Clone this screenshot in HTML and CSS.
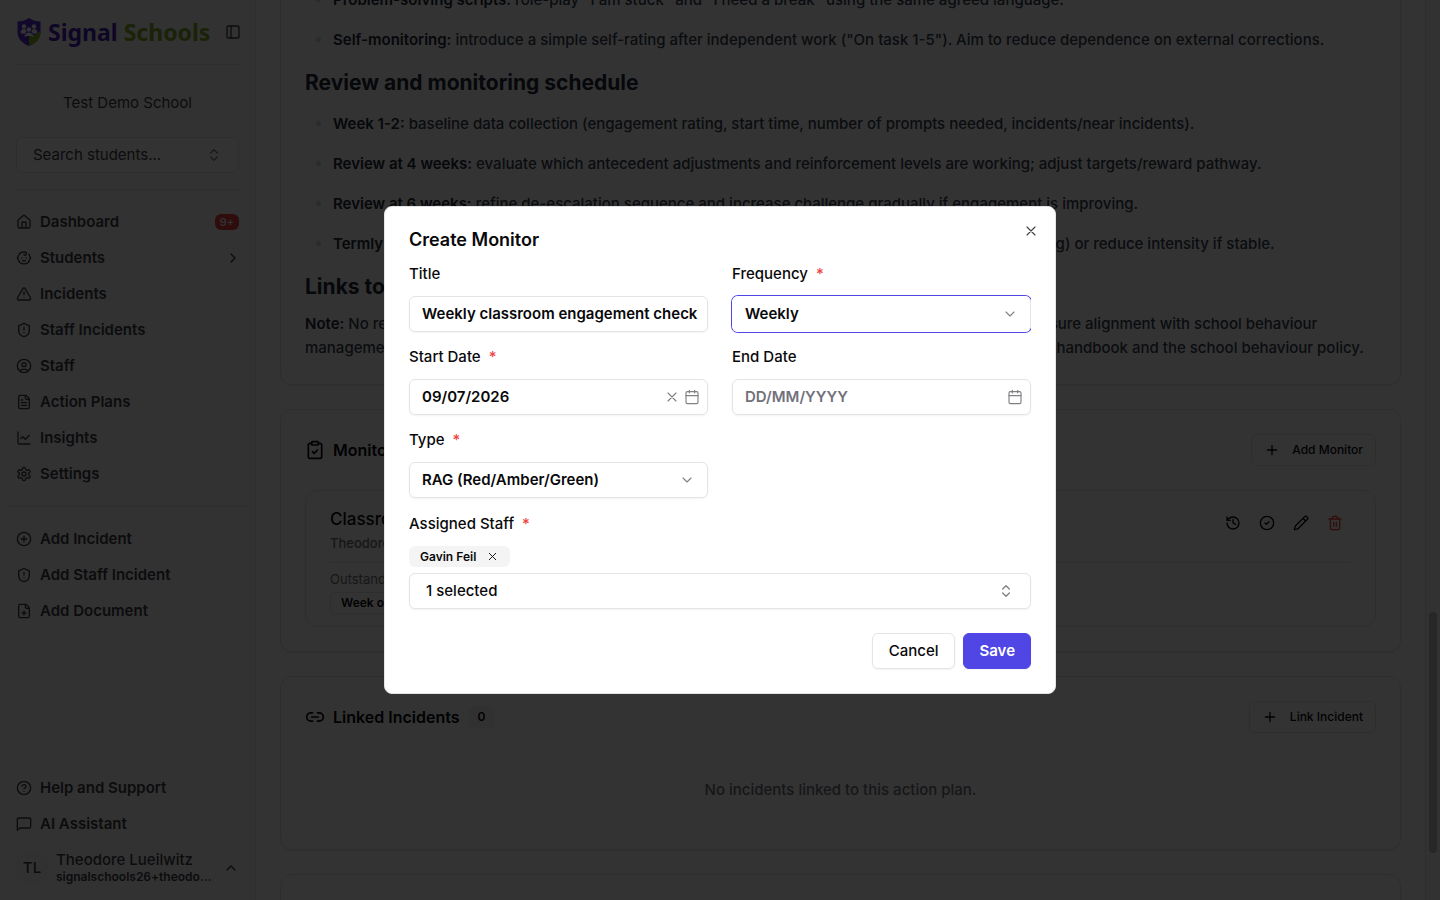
FILE: index.html
```html
<!DOCTYPE html>
<html lang="en">
<head>
<meta charset="utf-8">
<meta name="viewport" content="width=device-width, initial-scale=1">
<title>Signal Schools</title>
<link rel="stylesheet" href="styles.css">
</head>
<body>
<svg class="defs" aria-hidden="true">
  <symbol id="shield-alert" viewBox="0 0 24 24"><path d="M20 13c0 5-3.500 7.500-7.660 8.950a1 1 0 0 1-.67-.01C7.500 20.500 4 18 4 13V6a1 1 0 0 1 1-1c2 0 4.500-1.200 6.240-2.720a1.170 1.170 0 0 1 1.520 0C14.510 3.810 17 5 19 5a1 1 0 0 1 1 1zM12 8v4M12 16h.01"/></symbol>
  <symbol id="x" viewBox="0 0 24 24"><path d="M18 6 6 18M6 6l12 12"/></symbol>
  <symbol id="plus" viewBox="0 0 24 24"><path d="M5 12h14M12 5v14"/></symbol>
  <symbol id="updown" viewBox="0 0 24 24"><path d="m7 15 5 5 5-5M7 9l5-5 5 5"/></symbol>
  <symbol id="down" viewBox="0 0 24 24"><path d="m6 9 6 6 6-6"/></symbol>
  <symbol id="calendar" viewBox="0 0 24 24"><path d="M8 2v4M16 2v4M3 10h18"/><rect x="3" y="4" width="18" height="18" rx="2"/></symbol>
</svg>
<div class="app">
  <aside class="sidebar">
    <div class="brand">
      <svg class="brand-mark" viewBox="0 0 24 28" aria-hidden="true">
        <path d="M12 0C8.500 2.500 4.500 3.500.5 3.500V14c0 7 5 11.500 11.500 14C18.500 25.500 23.500 21 23.500 14V3.500C19.500 3.500 15.500 2.500 12 0z" fill="#5a2ad6"/>
        <path d="M23.500 14c0 7-5 11.500-11.500 14V18.500c4-.5 8.500-2 11.500-6z" fill="#84b81e"/>
        <g fill="#fff"><circle cx="7" cy="8.500" r="2.200"/><circle cx="17" cy="8.500" r="2.200"/><circle cx="12" cy="11.500" r="2.300"/><path d="M3.500 15c0-5 6-5 6-1.500l-2 2.500zM20.500 15c0-5-6-5-6-1.500l2 2.500zM7.500 19c0-6 9-6 9 0-2-1-3-1-4.500-1s-3 0-4.500 1z"/></g>
      </svg>
      <span class="brand-name"><span class="brand-first">Signal</span> <span class="brand-second">Schools</span></span>
      <button class="icon-button" type="button" aria-label="Toggle sidebar"><svg class="icon" viewBox="0 0 24 24"><rect x="3" y="3" width="18" height="18" rx="2"/><path d="M9 3v18"/></svg></button>
    </div>
    <hr class="rule">
    <p class="school">Test Demo School</p>
    <button class="search" type="button">Search students...<svg class="icon muted"><use href="#updown"/></svg></button>
    <hr class="rule above-nav">
    <nav class="nav">
      <a href="#"><svg class="icon" viewBox="0 0 24 24"><path d="M15 21v-8a1 1 0 0 0-1-1h-4a1 1 0 0 0-1 1v8"/><path d="M3 10a2 2 0 0 1 .71-1.530l7-6a2 2 0 0 1 2.580 0l7 6A2 2 0 0 1 21 10v9a2 2 0 0 1-2 2H5a2 2 0 0 1-2-2z"/></svg>Dashboard<span class="count">9+</span></a>
      <a href="#"><svg class="icon" viewBox="0 0 24 24"><path d="M9 12h.01M15 12h.01M10 16c.5.300 1.200.5 2 .5s1.500-.2 2-.5"/><path d="M19 6.300a9 9 0 0 1 1.800 3.900 2 2 0 0 1 0 3.600 9 9 0 0 1-17.600 0 2 2 0 0 1 0-3.600A9 9 0 0 1 12 3c2 0 3.500 1.100 3.500 2.500s-.9 2.500-2 2.500c-.8 0-1.500-.4-1.500-1"/></svg>Students<svg class="icon end" viewBox="0 0 24 24"><path d="m9 18 6-6-6-6"/></svg></a>
      <a href="#"><svg class="icon" viewBox="0 0 24 24"><path d="m21.730 18-8-14a2 2 0 0 0-3.480 0l-8 14A2 2 0 0 0 4 21h16a2 2 0 0 0 1.730-3M12 9v4M12 17h.01"/></svg>Incidents</a>
      <a href="#"><svg class="icon"><use href="#shield-alert"/></svg>Staff Incidents</a>
      <a href="#"><svg class="icon" viewBox="0 0 24 24"><circle cx="12" cy="12" r="10"/><circle cx="12" cy="10" r="3"/><path d="M7 20.660V19a2 2 0 0 1 2-2h6a2 2 0 0 1 2 2v1.660"/></svg>Staff</a>
      <a href="#"><svg class="icon" viewBox="0 0 24 24"><path d="M15 2H6a2 2 0 0 0-2 2v16a2 2 0 0 0 2 2h12a2 2 0 0 0 2-2V7zM14 2v4a2 2 0 0 0 2 2h4M10 9H8M16 13H8M16 17H8"/></svg>Action Plans</a>
      <a href="#"><svg class="icon" viewBox="0 0 24 24"><path d="M3 3v16a2 2 0 0 0 2 2h16M7 13l3-3 4 4 6-6"/></svg>Insights</a>
      <a href="#"><svg class="icon" viewBox="0 0 24 24"><path d="M12.220 2h-.44a2 2 0 0 0-2 2v.18a2 2 0 0 1-1 1.730l-.43.25a2 2 0 0 1-2 0l-.15-.08a2 2 0 0 0-2.730.73l-.22.380a2 2 0 0 0 .73 2.730l.15.100a2 2 0 0 1 1 1.720v.51a2 2 0 0 1-1 1.740l-.15.090a2 2 0 0 0-.73 2.730l.22.380a2 2 0 0 0 2.730.73l.15-.08a2 2 0 0 1 2 0l.43.250a2 2 0 0 1 1 1.730V20a2 2 0 0 0 2 2h.44a2 2 0 0 0 2-2v-.18a2 2 0 0 1 1-1.730l.43-.25a2 2 0 0 1 2 0l.15.080a2 2 0 0 0 2.730-.73l.22-.39a2 2 0 0 0-.73-2.730l-.15-.08a2 2 0 0 1-1-1.740v-.5a2 2 0 0 1 1-1.740l.15-.09a2 2 0 0 0 .73-2.730l-.22-.38a2 2 0 0 0-2.730-.73l-.15.080a2 2 0 0 1-2 0l-.43-.25a2 2 0 0 1-1-1.730V4a2 2 0 0 0-2-2z"/><circle cx="12" cy="12" r="3"/></svg>Settings</a>
    </nav>
    <hr class="rule wide">
    <nav class="nav">
      <a href="#"><svg class="icon" viewBox="0 0 24 24"><circle cx="12" cy="12" r="10"/><path d="M8 12h8M12 8v8"/></svg>Add Incident</a>
      <a href="#"><svg class="icon"><use href="#shield-alert"/></svg>Add Staff Incident</a>
      <a href="#"><svg class="icon" viewBox="0 0 24 24"><path d="M15 2H6a2 2 0 0 0-2 2v16a2 2 0 0 0 2 2h12a2 2 0 0 0 2-2V7zM14 2v4a2 2 0 0 0 2 2h4M9 15h6M12 18v-6"/></svg>Add Document</a>
    </nav>
    <div class="sidebar-foot">
      <nav class="nav">
        <a href="#"><svg class="icon" viewBox="0 0 24 24"><circle cx="12" cy="12" r="10"/><path d="M9.090 9a3 3 0 0 1 5.830 1c0 2-3 3-3 3M12 17h.01"/></svg>Help and Support</a>
        <a href="#"><svg class="icon" viewBox="0 0 24 24"><path d="M21 3H4a2 2 0 0 0-2 2v16.500L6 18h14a2 2 0 0 0 2-2V5a2 2 0 0 0-2-2z"/></svg>AI Assistant</a>
      </nav>
      <button class="user" type="button">
        <span class="avatar">TL</span>
        <span class="user-text"><span class="user-name">Theodore Lueilwitz</span><span class="user-mail">signalschools26+theodore@example.com</span></span>
        <svg class="icon" viewBox="0 0 24 24"><path d="m18 15-6-6-6 6"/></svg>
      </button>
    </div>
  </aside>

  <main class="main">
    <section class="card prose">
      <ul>
        <li><strong>Problem-solving scripts:</strong> role-play "I am stuck" and "I need a break" using the same agreed language.</li>
        <li><strong>Self-monitoring:</strong> introduce a simple self-rating after independent work ("On task 1-5"). Aim to reduce dependence on external corrections.</li>
      </ul>
      <h2>Review and monitoring schedule</h2>
      <ul>
        <li><strong>Week 1-2:</strong> baseline data collection (engagement rating, start time, number of prompts needed, incidents/near incidents).</li>
        <li><strong>Review at 4 weeks:</strong> evaluate which antecedent adjustments and reinforcement levels are working; adjust targets/reward pathway.</li>
        <li><strong>Review at 6 weeks:</strong> refine de-escalation sequence and increase challenge gradually if engagement is improving.</li>
        <li><strong>Termly review:</strong> agree whether to continue the plan, update the agreed strategies (including monitoring) or reduce intensity if stable.</li>
      </ul>
      <h2>Links to school policy</h2>
      <p><strong>Note:</strong> No relevant policy documents were found for this plan. Staff should regularly check this plan to ensure alignment with school behaviour management procedures, the safeguarding policy, the attendance policy, the staff wellbeing and training handbook and the school behaviour policy.</p>
    </section>

    <section class="card">
      <header class="card-head">
        <svg class="icon large" viewBox="0 0 24 24"><rect x="8" y="2" width="8" height="4" rx="1"/><path d="M16 4h2a2 2 0 0 1 2 2v14a2 2 0 0 1-2 2H6a2 2 0 0 1-2-2V6a2 2 0 0 1 2-2h2M9 14l2 2 4-4"/></svg>
        <h3>Monitors</h3>
        <button class="small-button" type="button"><svg class="icon"><use href="#plus"/></svg>Add Monitor</button>
      </header>
      <article class="monitor">
        <div class="monitor-top">
          <div class="monitor-title"><h4>Classroom engagement</h4><p>Theodore Lueilwitz</p></div>
          <div class="actions">
            <button class="icon-button" type="button" aria-label="History"><svg class="icon" viewBox="0 0 24 24"><path d="M3 12a9 9 0 1 0 9-9 9.750 9.750 0 0 0-6.740 2.740L3 8M3 3v5h5M12 7v5l4 2"/></svg></button>
            <button class="icon-button" type="button" aria-label="Complete"><svg class="icon" viewBox="0 0 24 24"><circle cx="12" cy="12" r="10"/><path d="m9 12 2 2 4-4"/></svg></button>
            <button class="icon-button" type="button" aria-label="Edit"><svg class="icon" viewBox="0 0 24 24"><path d="M21.170 6.810a1 1 0 0 0-3.980-3.990L3.840 16.170a2 2 0 0 0-.5.830l-1.320 4.350a.5.500 0 0 0 .62.620l4.350-1.320a2 2 0 0 0 .83-.5zM15 5l4 4"/></svg></button>
            <button class="icon-button danger" type="button" aria-label="Delete"><svg class="icon" viewBox="0 0 24 24"><path d="M3 6h18M19 6v14a2 2 0 0 1-2 2H7a2 2 0 0 1-2-2V6M8 6V4a2 2 0 0 1 2-2h4a2 2 0 0 1 2 2v2M10 11v6M14 11v6"/></svg></button>
          </div>
        </div>
        <div class="monitor-bottom">
          <p>Outstanding</p>
          <span class="week">Week of 6 Jul</span>
        </div>
      </article>
    </section>

    <section class="card">
      <header class="card-head">
        <svg class="icon large" viewBox="0 0 24 24"><path d="M9 17H7A5 5 0 0 1 7 7h2M15 7h2a5 5 0 1 1 0 10h-2M8 12h8"/></svg>
        <h3>Linked Incidents</h3><span class="zero">0</span>
        <button class="small-button" type="button"><svg class="icon"><use href="#plus"/></svg>Link Incident</button>
      </header>
      <p class="empty">No incidents linked to this action plan.</p>
    </section>
    <section class="card next"></section>
  </main>
  <div class="scrollbar"><div class="thumb"></div></div>
</div>

<div class="overlay">
  <form class="dialog" role="dialog" aria-modal="true" aria-labelledby="dialog-title">
    <header class="dialog-head">
      <h2 id="dialog-title">Create Monitor</h2>
      <button class="icon-button close" type="button" aria-label="Close"><svg class="icon"><use href="#x"/></svg></button>
    </header>
    <div class="fields">
      <div class="field"><label for="title">Title</label><div class="control wide-text"><input id="title" type="text" value="Weekly classroom engagement check"></div></div>
      <div class="field"><label for="frequency">Frequency <span class="required">*</span></label><div class="control focused"><select id="frequency"><option>Weekly</option></select><svg class="icon muted"><use href="#down"/></svg></div></div>
      <div class="field"><label for="start">Start Date <span class="required">*</span></label><div class="control date"><input id="start" type="text" value="09/07/2026"><button class="icon-button muted" type="button" aria-label="Clear date"><svg class="icon"><use href="#x"/></svg></button><button class="icon-button muted" type="button" aria-label="Pick start date"><svg class="icon"><use href="#calendar"/></svg></button></div></div>
      <div class="field"><label for="end">End Date</label><div class="control date"><input id="end" type="text" placeholder="DD/MM/YYYY"><button class="icon-button muted" type="button" aria-label="Pick end date"><svg class="icon"><use href="#calendar"/></svg></button></div></div>
      <div class="field"><label for="type">Type <span class="required">*</span></label><div class="control"><select id="type"><option>RAG (Red/Amber/Green)</option></select><svg class="icon muted"><use href="#down"/></svg></div></div>
    </div>
    <div class="staff">
      <label for="staff">Assigned Staff <span class="required">*</span></label>
      <span class="chip">Gavin Feil<button class="icon-button" type="button" aria-label="Remove Gavin Feil"><svg class="icon"><use href="#x"/></svg></button></span>
      <button class="staff-select" id="staff" type="button">1 selected<svg class="icon muted"><use href="#updown"/></svg></button>
    </div>
    <footer class="dialog-foot">
      <button class="button" type="button">Cancel</button>
      <button class="button primary" type="submit">Save</button>
    </footer>
  </form>
</div>
</body>
</html>
```
FILE: styles.css
```css
* { box-sizing: border-box; }
body, h2, h3, h4, p, ul, hr { margin: 0; padding: 0; }
body {
  height: 100vh;
  overflow: hidden;
  font: 500 14px/20px Inter, "Noto Sans", sans-serif;
  color: #09090b;
  background: #fff;
}
button, input, select { font: inherit; color: inherit; }
button { padding: 0; border: 0; background: none; }
a { color: inherit; text-decoration: none; }
.defs { display: none; }
.icon {
  width: 16px;
  height: 16px;
  flex: none;
  fill: none;
  stroke: currentColor;
  stroke-width: 2;
  stroke-linecap: round;
  stroke-linejoin: round;
}
.icon.large { width: 20px; height: 20px; }
.icon-button { display: inline-flex; flex: none; }
.muted { color: #808085; }

.app {
  display: grid;
  grid-template-columns: 256px minmax(0, 1fr) 15px;
  height: 100vh;
}

.sidebar {
  display: flex;
  flex-direction: column;
  padding: 16px 16px 12px;
  background: #fafafa;
  border-right: 1px solid #e4e4e7;
  color: #3f3f46;
  font-size: 15px;
}
.brand { display: flex; align-items: center; height: 32px; margin-right: -2px; }
.brand-mark { width: 26px; height: 28px; margin-right: 6px; }
.brand-name { flex: 1; font: 700 23px/32px "Noto Sans", sans-serif; white-space: nowrap; }
.brand-first { color: #4a22b8; }
.brand-second { color: #84a82a; }
.rule { flex: none; height: 1px; border: 0; background: #e4e4e7; margin: 16px 0; }
.rule.above-nav { margin-bottom: 14px; }
.rule.wide { margin: 14px -8px 14px; }
.school { padding: 12px 0 24px; text-align: center; font-weight: 400; }
.search {
  display: flex;
  align-items: center;
  justify-content: space-between;
  height: 36px;
  padding: 0 16px;
  border: 1px solid #e4e4e7;
  border-radius: 6px;
  background: #fff;
  font-weight: 400;
}
.nav { display: flex; flex-direction: column; }
.nav a { display: flex; align-items: center; gap: 8px; height: 36px; font-weight: 600; }
.nav .end { margin-left: auto; margin-right: -2px; }
.count {
  margin-left: auto;
  padding: 0 5px;
  border-radius: 6px;
  background: #ef4444;
  color: #fff;
  font-size: 11px;
  font-weight: 500;
  line-height: 16px;
}
.sidebar-foot { margin-top: auto; }
.user { display: flex; align-items: center; gap: 8px; width: 100%; height: 40px; margin-top: 6px; text-align: left; }
.avatar {
  display: grid;
  place-items: center;
  width: 32px;
  height: 32px;
  border-radius: 8px;
  background: #f4f4f5;
}
.user-text { flex: 1; min-width: 0; display: flex; flex-direction: column; font-weight: 500; }
.user-name { line-height: 18px; }
.user-mail { overflow: hidden; text-overflow: ellipsis; white-space: nowrap; font-size: 12px; font-weight: 600; line-height: 16px; }

.main {
  display: flex;
  flex-direction: column;
  gap: 24px;
  min-width: 0;
  overflow: hidden;
  padding: 0 24px;
}
.card {
  flex: none;
  padding: 24px;
  border: 1px solid #e4e4e7;
  border-radius: 12px;
  box-shadow: 0 1px 2px rgba(0, 0, 0, .08);
}
.prose { margin-top: -37px; padding-bottom: 24px; color: #374151; font-size: 15px; line-height: 24px; }
.prose strong { color: #1f2937; font-weight: 600; }
.prose ul { display: grid; gap: 16px; padding-left: 28px; }
.prose li::marker { color: #d1d5db; }
.prose h2 { margin: 16px 0 10px; color: #1f2937; font-size: 21px; font-weight: 700; line-height: 30px; }
.prose h2 + ul { margin-top: 14px; }

.card-head { display: flex; align-items: center; gap: 8px; height: 32px; }
.card-head h3 { font-size: 16px; font-weight: 600; line-height: 24px; }
.small-button {
  display: flex;
  align-items: center;
  gap: 12px;
  height: 32px;
  margin-left: auto;
  padding: 0 12px;
  border: 1px solid #e4e4e7;
  border-radius: 6px;
  font-size: 12px;
}
.monitor { margin-top: 24px; padding: 16px 24px 12px; border: 1px solid #e4e4e7; border-radius: 12px; }
.monitor-top { display: flex; justify-content: space-between; padding-bottom: 7px; border-bottom: 1px solid #e4e4e7; }
.monitor-title h4 { font-size: 17px; font-weight: 500; line-height: 24px; }
.monitor-title p { color: #71717a; font-size: 13px; line-height: 24px; }
.actions { display: flex; align-items: center; gap: 18px; height: 32px; padding-right: 8px; }
.danger { color: #ef4444; }
.monitor-bottom { display: flex; flex-direction: column; align-items: flex-start; gap: 3px; padding-top: 6px; }
.monitor-bottom p { color: #71717a; font-size: 13px; font-weight: 400; line-height: 20px; }
.week {
  padding: 0 10px;
  border: 1px solid #e4e4e7;
  border-radius: 6px;
  font-size: 12px;
  font-weight: 600;
}
.zero { padding: 0 10px; border-radius: 6px; background: #f4f4f5; font-size: 12px; font-weight: 600; line-height: 22px; }
.empty { padding: 47px 0 25px; color: #71717a; text-align: center; font-size: 15px; }
.next { height: 120px; }
.scrollbar { padding: 0 3px; background: #fafafa; border-left: 1px solid #e4e4e7; }
.thumb { height: 241px; margin-top: 68vh; border-radius: 4px; background: #c1c1c1; }

.overlay {
  position: fixed;
  inset: 0;
  display: grid;
  place-items: center;
  background: rgba(0, 0, 0, .8);
}
.dialog {
  width: 100%;
  max-width: 672px;
  padding: 23px 24px 24px;
  border: 1px solid #e4e4e7;
  border-radius: 8px;
  background: #fff;
  font-size: 15px;
}
.dialog-head { display: flex; justify-content: space-between; margin-bottom: 14px; }
.dialog-head h2 { font-size: 18px; font-weight: 600; line-height: 20px; }
.close { margin: -7px -8px 0 0; color: #3f3f46; }
.fields { display: grid; grid-template-columns: repeat(2, minmax(0, 1fr)); gap: 15px 24px; }
.field { display: grid; grid-template-columns: minmax(0, 1fr); gap: 12px; }
label { line-height: 20px; }
.required { margin-left: 4px; color: #ef4444; }
.control {
  display: flex;
  align-items: center;
  height: 36px;
  padding: 0 12px;
  border: 1px solid #e4e4e7;
  border-radius: 6px;
  box-shadow: 0 1px 2px rgba(0, 0, 0, .05);
  font-weight: 600;
}
.control.date { gap: 4px; padding-right: 7px; }
.control.wide-text { padding-right: 7px; }
.control.focused {
  border-color: #fff #e4e4e7 #fff #fff;
  box-shadow: 0 0 0 1px #4f46e5;
  clip-path: inset(-1px 0 -1px -1px);
}
.control .icon, .close .icon, .chip .icon { stroke-width: 1.700; }
.control input, .control select {
  flex: 1;
  min-width: 0;
  padding: 0;
  border: 0;
  outline: 0;
  background: none;
  appearance: none;
}
.control input::placeholder { color: #71717a; opacity: 1; }
.staff { display: flex; flex-direction: column; align-items: flex-start; margin-top: 16px; }
.chip {
  display: flex;
  align-items: center;
  gap: 10px;
  margin: 12px 0 6px;
  padding: 0 11px;
  border-radius: 6px;
  background: #f4f4f5;
  font-size: 12px;
  font-weight: 600;
  line-height: 21px;
}
.chip .icon { width: 13px; height: 13px; }
.staff-select {
  display: flex;
  align-items: center;
  justify-content: space-between;
  width: 100%;
  height: 36px;
  padding: 0 16px;
  border: 1px solid #e4e4e7;
  border-radius: 6px;
  box-shadow: 0 1px 2px rgba(0, 0, 0, .05);
}
.dialog-foot { display: flex; justify-content: flex-end; gap: 8px; margin-top: 24px; }
.button { height: 36px; padding: 0 16px; border: 1px solid #e4e4e7; border-radius: 6px; box-shadow: 0 1px 2px rgba(0, 0, 0, .05); }
.primary { padding: 0 15px; border-color: #4f46e5; background: #4f46e5; color: #fff; font-weight: 600; }
```
